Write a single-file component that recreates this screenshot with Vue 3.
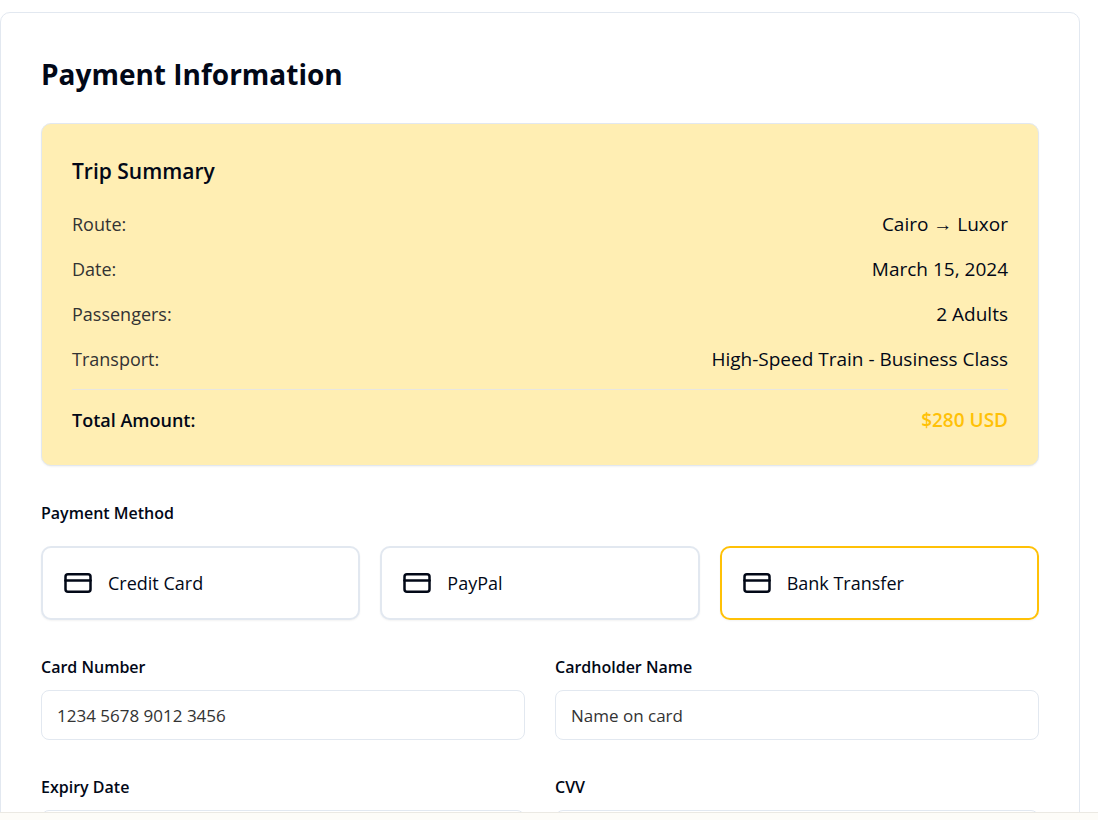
<script setup>
import { ref } from 'vue'

const trip = [
  { label: 'Route:', value: 'Cairo → Luxor' },
  { label: 'Date:', value: 'March 15, 2024' },
  { label: 'Passengers:', value: '2 Adults' },
  { label: 'Transport:', value: 'High-Speed Train - Business Class' },
]

const methods = ['Credit Card', 'PayPal', 'Bank Transfer']
const selected = ref('Bank Transfer')

const fields = [
  { id: 'card-number', label: 'Card Number', placeholder: '1234 5678 9012 3456' },
  { id: 'cardholder-name', label: 'Cardholder Name', placeholder: 'Name on card' },
  { id: 'expiry-date', label: 'Expiry Date', placeholder: '' },
  { id: 'cvv', label: 'CVV', placeholder: '' },
]
</script>

<template>
  <div class="page">
    <main class="content">
      <form class="card" @submit.prevent>
        <h1 class="title">Payment Information</h1>

        <section class="summary">
          <h2 class="summary-title">Trip Summary</h2>
          <dl class="rows">
            <div v-for="row in trip" :key="row.label" class="row">
              <dt>{{ row.label }}</dt>
              <dd>{{ row.value }}</dd>
            </div>
            <div class="row total">
              <dt>Total Amount:</dt>
              <dd>$280 USD</dd>
            </div>
          </dl>
        </section>

        <h3 id="method-label" class="label">Payment Method</h3>
        <div class="methods" role="group" aria-labelledby="method-label">
          <button
            v-for="name in methods"
            :key="name"
            type="button"
            class="method"
            :class="{ active: name === selected }"
            :aria-pressed="name === selected"
            @click="selected = name"
          >
            <svg class="icon" viewBox="0 0 24 24" aria-hidden="true">
              <rect width="20" height="14" x="2" y="5" rx="2" />
              <line x1="2" x2="22" y1="10" y2="10" />
            </svg>
            <span>{{ name }}</span>
          </button>
        </div>

        <div class="fields">
          <div v-for="field in fields" :key="field.id" class="field">
            <label class="label" :for="field.id">{{ field.label }}</label>
            <input :id="field.id" class="input" type="text" :placeholder="field.placeholder" />
          </div>
        </div>
      </form>
    </main>
    <footer class="bottom-bar"></footer>
  </div>
</template>

<style>
body {
  margin: 0;
  background: #fff;
}
</style>

<style scoped>
.page {
  display: flex;
  flex-direction: column;
  height: 100vh;
  color: #020817;
  font-family: "Open Sans", "Noto Sans", sans-serif;
  font-size: 18px;
  line-height: 30px;
}

.page *,
.page *::before {
  box-sizing: border-box;
}

.content {
  flex: 1;
  min-height: 0;
  overflow: hidden;
  padding: 12px 18px 0 0;
}

.card {
  padding: 40px;
  border: 1px solid #e2e8f0;
  border-radius: 10px;
  background: #fff;
}

.title {
  margin: 0 0 28px;
  font-size: 28px;
  font-weight: 700;
  line-height: 42px;
}

.summary {
  padding: 30px;
  border: 1px solid #e2e8f0;
  border-radius: 10px;
  background: #ffeeb3;
  box-shadow: 0 1px 2px rgba(0, 0, 0, 0.05);
}

.summary-title {
  margin: 0 0 20px;
  font-size: 21px;
  font-weight: 600;
  line-height: 35px;
}

.rows {
  display: grid;
  gap: 15px;
  margin: 0;
}

.row {
  display: flex;
  justify-content: space-between;
}

.row dt {
  color: #333;
}

.row dd {
  margin: 0;
  font-size: 19px;
}

.total {
  padding-top: 15px;
  border-top: 1px solid #e8e6e0;
  font-weight: 600;
}

.total dt {
  color: #020817;
}

.total dd {
  color: #ffc107;
}

.label {
  display: block;
  margin: 0;
  font-size: 16px;
  font-weight: 600;
  line-height: 24px;
}

h3.label {
  margin-top: 35px;
}

.methods {
  display: grid;
  grid-template-columns: repeat(3, 1fr);
  gap: 20px;
  margin-top: 21px;
}

.method {
  display: flex;
  align-items: center;
  gap: 15px;
  padding: 20px;
  border: 2px solid #e2e8f0;
  border-radius: 10px;
  background: #fff;
  box-shadow: 0 1px 2px rgba(0, 0, 0, 0.05);
  color: inherit;
  font: inherit;
  cursor: pointer;
}

.method.active {
  border-color: #ffc107;
}

.icon {
  width: 30px;
  height: 30px;
  fill: none;
  stroke: currentColor;
  stroke-width: 2;
  stroke-linecap: round;
  stroke-linejoin: round;
}

.fields {
  display: grid;
  grid-template-columns: repeat(2, 1fr);
  gap: 35px 30px;
  margin-top: 35px;
}

.input {
  display: block;
  width: 100%;
  height: 50px;
  margin-top: 11px;
  padding: 0 15px;
  border: 1px solid #e2e8f0;
  border-radius: 8px;
  background: #fff;
  color: #020817;
  font: inherit;
  font-size: 17px;
}

.input::placeholder {
  color: #333;
  opacity: 1;
}

.bottom-bar {
  flex: none;
  height: 8px;
  border-top: 1px solid #ebe9e3;
  background: #fdfcf8;
}
</style>
